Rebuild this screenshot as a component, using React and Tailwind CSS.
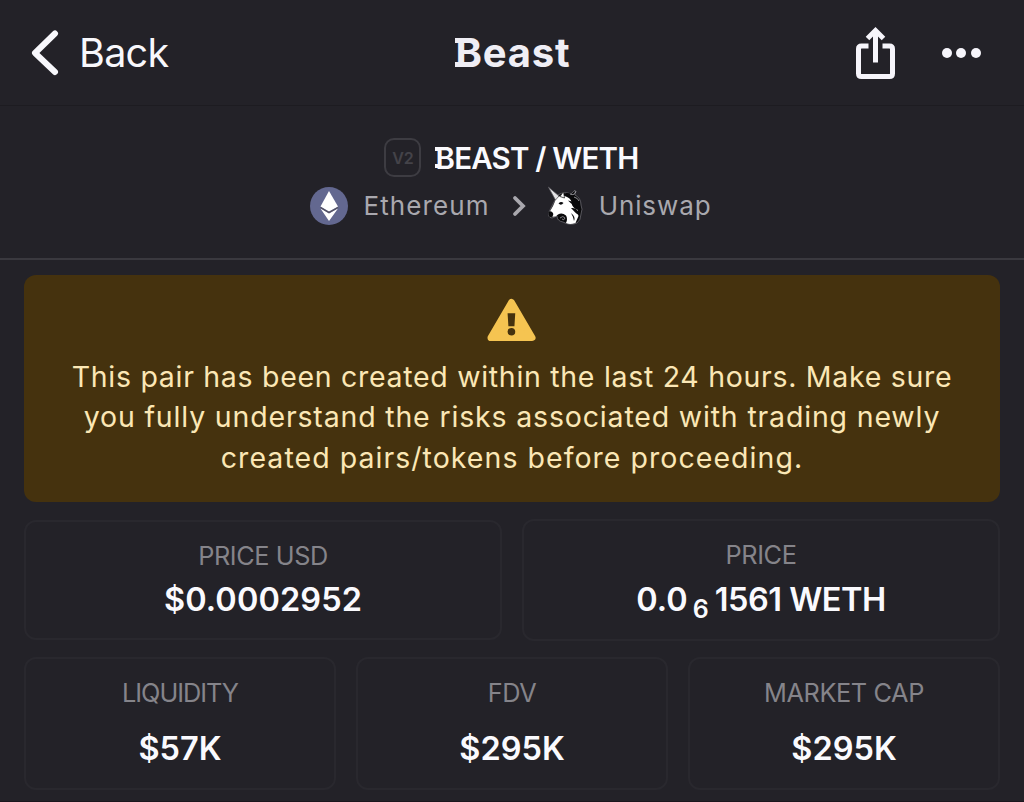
import React from "react";
import { clsx } from "clsx";

const TOP_STATS = [
  { id: "price-usd", label: "PRICE USD", value: "$0.0002952" },
  { id: "price", label: "PRICE" },
];

const BOTTOM_STATS = [
  { id: "liquidity", label: "LIQUIDITY", value: "$57K", labelClass: "tracking-[-1px]" },
  { id: "fdv", label: "FDV", value: "$295K", labelClass: "tracking-[-0.4px]" },
  { id: "mcap", label: "MARKET CAP", value: "$295K", labelClass: "tracking-[-0.4px]" },
];

function BackIcon() {
  return (
    <svg width="28" height="46" viewBox="0 0 28 46" fill="none">
      <path
        d="M24 3.5 L4 23 L24 42"
        stroke="#f8f8fc"
        strokeWidth="6"
        strokeLinecap="round"
        strokeLinejoin="round"
      />
    </svg>
  );
}

function ShareIcon() {
  return (
    <svg width="40" height="54" viewBox="0 0 40 54" fill="none" stroke="#f6f5fb">
      <path
        d="M12.500 20 H5.500 Q2.500 20 2.500 23 V47.500 Q2.500 50.500 5.500 50.500 H33.500 Q36.500 50.500 36.500 47.500 V23 Q36.500 20 33.500 20 H26.500"
        strokeWidth="5"
      />
      <path d="M19.500 36.500 V6" strokeWidth="5" />
      <path d="M11.500 12.500 L19.500 4.500 L27.500 12.500" strokeWidth="5" />
    </svg>
  );
}

function EthereumIcon() {
  return (
    <svg width="38" height="38" viewBox="0 0 38 38">
      <circle cx="19" cy="19" r="19" fill="#636890" />
      <path d="M19 4 L28 19.500 L19 24.500 L10.500 19.500 Z" fill="#fff" />
      <path d="M10.500 21.500 L19 26.500 L28 21.500 L19 34 Z" fill="#fff" />
      <path d="M10.500 20.500 L19 25.500 L28 20.500" fill="none" stroke="#555260" strokeWidth="1.200" />
    </svg>
  );
}

function UnicornIcon() {
  return (
    <svg width="38" height="40" viewBox="0 0 38 40">
      {/* dark mane */}
      <path
        d="M12 10 Q18 6 25 9 L29 5 L29 10 Q35 13 35 20 Q37 24 35 29 Q35 35 31 38 Q24 41 17 37 Q11 36 11 31 L6 33 Q1 32 3 27 L8 17 Z"
        fill="#09090b"
        stroke="#77767d"
        strokeWidth="0.700"
      />
      {/* head and neck */}
      <path
        d="M10 14 Q15 8 21 12 Q26 14 26 20 Q28 24 32 25 Q31 28 32.500 31 L29.500 38 Q24 40 20 38 Q22 34 20 30.500 Q16 27 12 29.500 Q9 33 5 31 L3 28 L7 21 Z"
        fill="#fff"
      />
      <path d="M2.300 2 L13 11 L9.500 15 Z" fill="#e4e4e6" stroke="#56545a" strokeWidth="0.700" />
      <path d="M14 11.500 L17.500 6.500 L18.500 13 Z" fill="#fff" stroke="#111" strokeWidth="0.700" />
      <path d="M2.500 27 Q5 25 7 28 Q8 31 5 32 Q2 32 2.500 27 Z" fill="#09090b" />
      <path d="M12.500 18.500 Q15 16 17.500 18 Q15 21 12.500 18.500 Z" fill="#09090b" />
      <path d="M20 9.500 Q27 9 31 16" fill="none" stroke="#09090b" strokeWidth="3" />
      <path d="M22 15.500 Q28 17 34 18.500 L34 23 Q27 21 22 15.500 Z" fill="#09090b" />
      <path d="M25 23 Q32 22 34 31 Q29 28 25 23 Z" fill="#09090b" />
      <path d="M25 28 Q30 32 28 36 Q27 31 25 28 Z" fill="#09090b" />
      <path d="M24 9 Q29 11 30 6 M28 12 Q32 13 33 16" fill="none" stroke="#a09fa5" strokeWidth="0.900" />
      <path d="M14 33 Q17 30 19 33 Q18 36 16 34" fill="none" stroke="#8d8c92" strokeWidth="0.900" />
    </svg>
  );
}

function WarningIcon() {
  return (
    <svg className="-ml-px" width="49" height="44" viewBox="0 0 50 44">
      <path
        d="M25 4 L46 40 H4 Z"
        fill="#f5c451"
        stroke="#f5c451"
        strokeWidth="7"
        strokeLinejoin="round"
      />
      <path d="M21 15 H28.800 L28 28.500 H21.800 Z" fill="#45320e" />
      <circle cx="24.900" cy="34" r="3.900" fill="#45320e" />
    </svg>
  );
}

// capital B with short slab feet on its left side
function SlabB({ large }) {
  const foot = clsx("absolute bg-current", large ? "left-[-1px] h-[5px] w-[6px]" : "left-0 h-[4px] w-[4px]");
  return (
    <span className="relative inline-block">
      B
      <span className={clsx(foot, large ? "top-[10px]" : "top-[9px]")} />
      <span className={clsx(foot, large ? "bottom-[11px]" : "bottom-[10px]")} />
    </span>
  );
}

function StatCard({ label, className, labelClass, children }) {
  return (
    <div
      className={clsx(
        "flex flex-col items-center rounded-xl border-2 border-[#29282e] whitespace-nowrap",
        className
      )}
    >
      <div className={clsx("text-[25.3px] leading-8 text-[#85848a]", labelClass)}>{label}</div>
      {children}
    </div>
  );
}

export default function App() {
  const valueClass = "text-[32.5px] font-semibold leading-10 text-[#fafafe]";

  return (
    <div className="flex h-[802px] w-[1024px] flex-col overflow-hidden border-b border-[#1b171e] bg-[#232228] font-['Inter',sans-serif]">
      {/* Header */}
      <header className="grid h-[106px] shrink-0 grid-cols-3 items-center border-b border-[#1d1c21] pr-[43px] pl-[31px]">
        <div className="flex items-center gap-5">
          <BackIcon />
          <span className="text-[39.5px] leading-[50px] tracking-[-0.7px] text-[#f8f8fc]">Back</span>
        </div>
        <h1 className="pl-[14px] text-center text-[40px] font-bold leading-[50px] tracking-[0.8px] text-[#efeef5]">
          <SlabB large />
          east
        </h1>
        <div className="flex items-center justify-end gap-[46px]">
          <ShareIcon />
          <div className="flex gap-[4.5px]">
            <span className="size-[10px] rounded-full bg-[#f6f5fb]" />
            <span className="size-[10px] rounded-full bg-[#f6f5fb]" />
            <span className="size-[10px] rounded-full bg-[#f6f5fb]" />
          </div>
        </div>
      </header>

      {/* Pair info */}
      <section className="flex h-[154px] shrink-0 flex-col items-center border-b-2 border-[#3a393f] pt-8">
        <div className="flex h-[39px] items-center gap-[14px] pr-px">
          <span className="flex h-[39px] w-[37px] items-center justify-center rounded-[10px] border-2 border-[#3d3c42] text-[16px] font-semibold text-[#444349]">
            V2
          </span>
          <h2 className="text-[29.5px] font-semibold leading-10 tracking-[-0.8px] text-[#fafafe]">
            <SlabB />
            EAST / WETH
          </h2>
        </div>
        <div className="mt-[9px] flex h-10 items-center pr-[3px] text-[26px] text-[#a9a8ae]">
          <EthereumIcon />
          <span className="-mt-[2px] ml-4 tracking-[1.1px]">Ethereum</span>
          <svg className="ml-[22px]" width="14" height="22" viewBox="0 0 14 22" fill="none">
            <path d="M3 3 L11 11 L3 19" stroke="#a9a8ae" strokeWidth="3.800" strokeLinecap="round" />
          </svg>
          <span className="-mt-[2px] ml-[20px]">
            <UnicornIcon />
          </span>
          <span className="-mt-[2px] ml-[15px] tracking-[0.9px]">Uniswap</span>
        </div>
      </section>

      <main className="flex flex-col px-6 pt-[15px]">
        {/* New pair warning */}
        <div className="flex h-[227px] flex-col items-center rounded-xl bg-[#45320e] pt-[23px]">
          <WarningIcon />
          <p className="mt-[15px] text-center text-[28.5px] leading-[40.3px] whitespace-nowrap text-[#fbe7b5]">
            <span className="tracking-[0.7px]">This pair has been created within the last 24 hours. Make sure</span>
            <br />
            <span className="tracking-[0.83px]">you fully understand the risks associated with trading newly</span>
            <br />
            <span className="tracking-[1.04px]">created pairs/tokens before proceeding.</span>
          </p>
        </div>

        <div className="mt-[17px] grid h-[122px] grid-cols-2 items-center gap-5">
          <StatCard label={TOP_STATS[0].label} className="h-[120px] pt-[18px]" labelClass="tracking-[-0.4px]">
            <div className={clsx(valueClass, "mt-[8px] tracking-[0.1px]")}>{TOP_STATS[0].value}</div>
          </StatCard>
          <StatCard label={TOP_STATS[1].label} className="h-[122px] pt-[18px]" labelClass="tracking-[-0.4px]">
            <div className={clsx(valueClass, "mt-[9px] flex")}>
              <span>0.0</span>
              <span className="mr-[6px] ml-[5px] translate-y-[9px] text-[25px]">6</span>
              <span className="tracking-[-0.5px]">1561 WETH</span>
            </div>
          </StatCard>
        </div>

        <div className="mt-4 grid grid-cols-3 gap-5">
          {BOTTOM_STATS.map((s) => (
            <StatCard key={s.id} label={s.label} className="h-[133px] pt-[18px]" labelClass={s.labelClass}>
              <div className={clsx(valueClass, "mt-[20px]")}>{s.value}</div>
            </StatCard>
          ))}
        </div>
      </main>
    </div>
  );
}
